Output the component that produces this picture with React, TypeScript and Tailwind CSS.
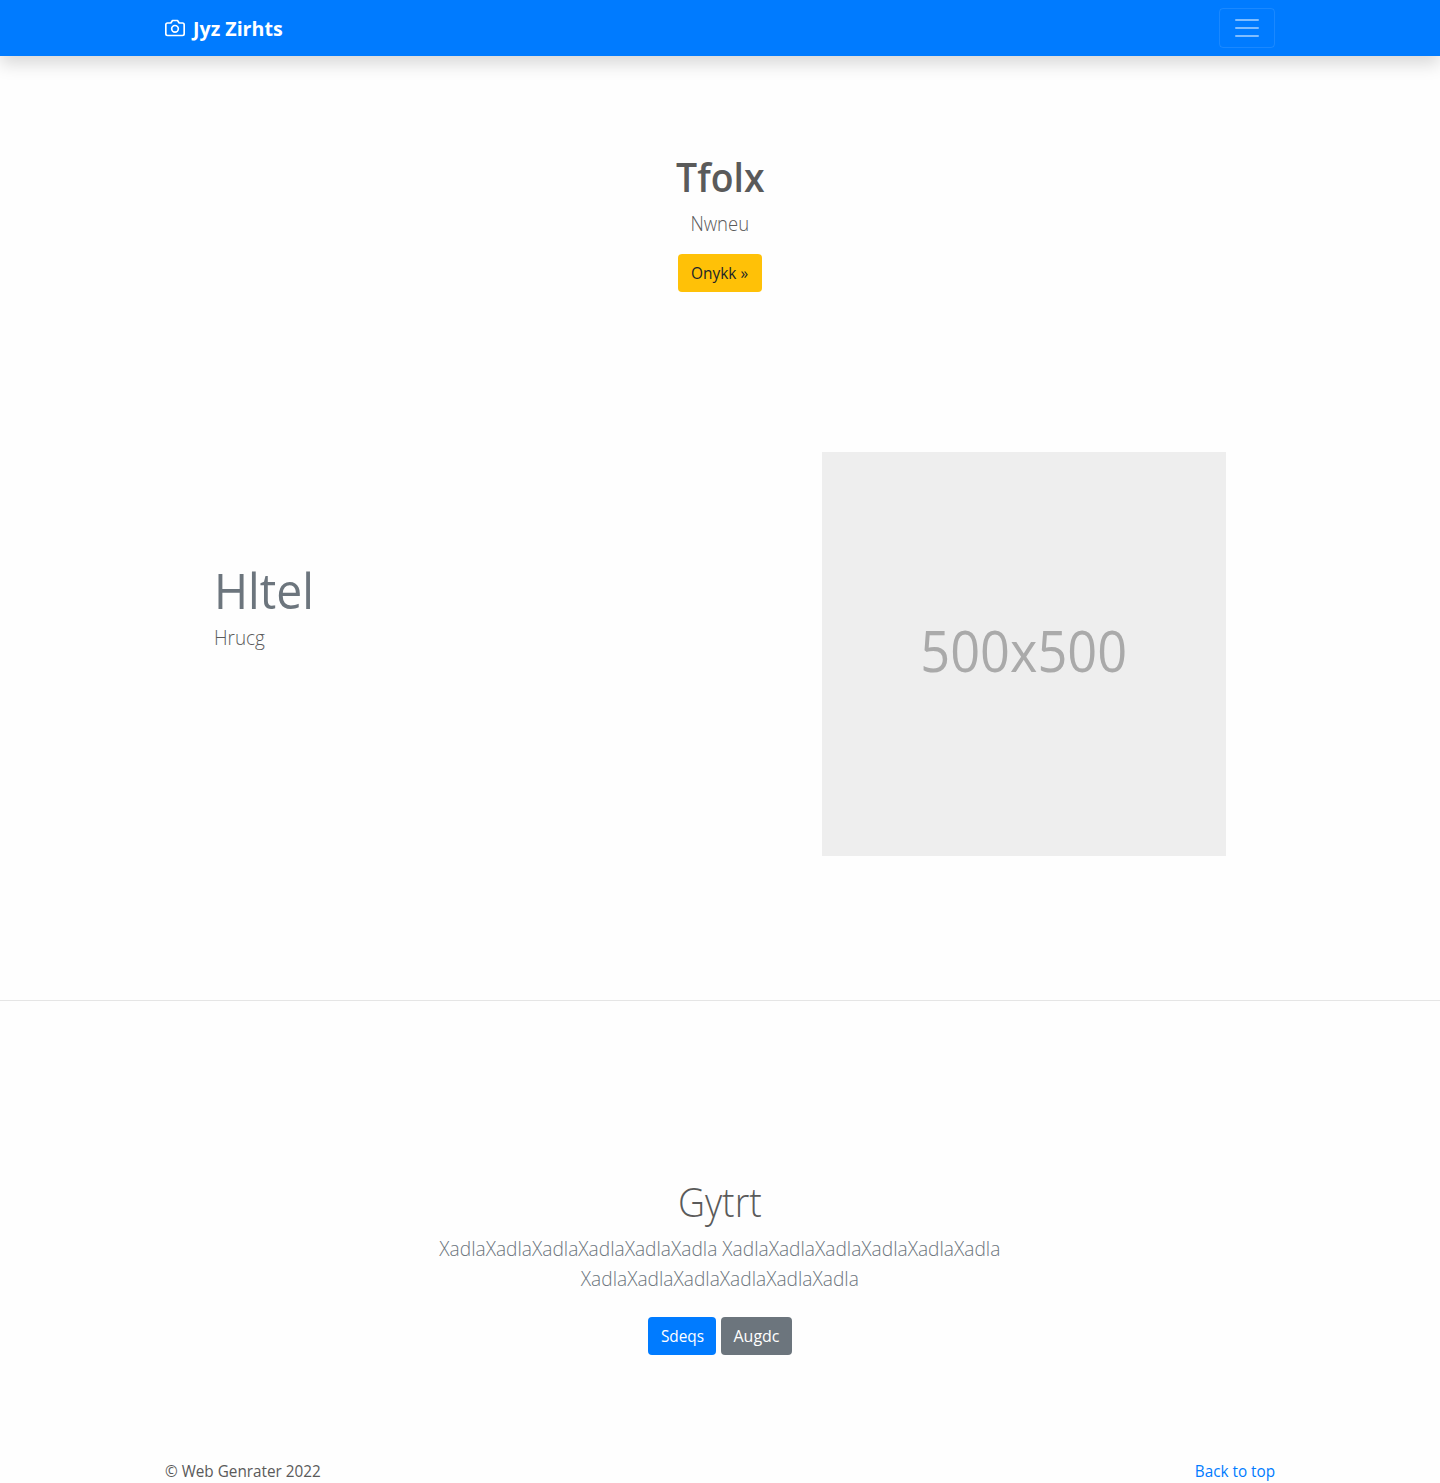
const CameraIcon = () => (
  <svg
    width="20"
    height="20"
    viewBox="0 0 24 24"
    fill="none"
    stroke="currentColor"
    strokeWidth="2"
    strokeLinecap="round"
    strokeLinejoin="round"
    className="mr-2"
  >
    <path d="M23 19a2 2 0 0 1-2 2H3a2 2 0 0 1-2-2V8a2 2 0 0 1 2-2h4l2-3h6l2 3h4a2 2 0 0 1 2 2z" />
    <circle cx="12" cy="13" r="4" />
  </svg>
);

const MenuIcon = () => (
  <svg width="30" height="30" viewBox="0 0 30 30" stroke="rgba(255,255,255,0.5)" strokeWidth="2" strokeMiterlimit="10">
    <path strokeLinecap="round" d="M4 7h22M4 15h22M4 23h22" />
  </svg>
);

export default function App() {
  return (
    <div className="flex h-[1483px] flex-col overflow-hidden bg-[#fefefe] font-['Open_Sans','Noto_Sans',sans-serif] text-base text-[#5a5a5a]">
      <header className="h-14 shrink-0 bg-[#007bff] shadow-[0_8px_16px_rgba(0,0,0,0.15)]">
        <div className="mx-auto flex h-full w-[1110px] items-center justify-between">
          <a href="#" className="flex items-center text-white">
            <CameraIcon />
            <strong className="origin-left scale-x-[0.98] pt-[2px] text-[20px] leading-[30px] font-bold whitespace-nowrap">Jyz Zirhts</strong>
          </a>
          <button className="flex h-10 w-14 items-center justify-center rounded-[4px] border border-white/10" aria-label="Menu">
            <MenuIcon />
          </button>
        </div>
      </header>

      <section className="flex h-[396px] shrink-0 flex-col items-center pt-[97px]">
        <h1 className="scale-x-[0.935] text-[40px] leading-[48px] font-semibold">Tfolx</h1>
        <p className="mt-2 scale-x-[0.925] text-[20px] leading-[30px] font-light">Nwneu</p>
        <a href="#" className="mt-[15px] flex h-[38px] w-[84px] items-center justify-center rounded-[4px] bg-[#ffc107] text-[#212529]">
          <span className="scale-x-[0.965]">Onykk »</span>
        </a>
      </section>

      <section className="mx-auto flex h-[404px] w-[1012px] shrink-0 justify-between">
        <div className="pt-[108px]">
          <h2 className="origin-left scale-x-[0.925] text-[50px] leading-[60px] text-[#6c757d]">Hltel</h2>
          <p className="mt-[3px] origin-left scale-x-[0.945] text-[20px] leading-[30px] font-light">Hrucg</p>
        </div>
        <div className="flex size-[404px] items-center justify-center bg-[#eee] pb-[9px] text-[56px] text-[#aaa]">
          <span className="scale-x-[0.935]">500x500</span>
        </div>
      </section>

      <hr className="mt-36 shrink-0 border-t border-[#e5e5e5]" />

      <section className="flex shrink-0 flex-col items-center pt-[177px] text-center">
        <h2 className="scale-x-[0.935] text-[40px] leading-[48px] font-light">Gytrt</h2>
        <p className="mt-2 scale-x-[0.958] text-[20px] leading-[30px] font-light whitespace-nowrap text-[#6c757d]">
          XadlaXadlaXadlaXadlaXadlaXadla XadlaXadlaXadlaXadlaXadlaXadla
          <br />
          XadlaXadlaXadlaXadlaXadlaXadla
        </p>
        <div className="mt-[23px] flex gap-[5px] text-white">
          <a href="#" className="flex h-[38px] w-[68px] items-center justify-center rounded-[4px] bg-[#007bff]">
            <span className="scale-x-[0.96]">Sdeqs</span>
          </a>
          <a href="#" className="flex h-[38px] w-[71px] items-center justify-center rounded-[4px] bg-[#6c757d]">
            <span>Augdc</span>
          </a>
        </div>
      </section>

      <footer className="mx-auto mt-[104px] flex w-[1110px] shrink-0 justify-between leading-6">
        <p className="origin-left scale-x-[0.955]">© Web Genrater 2022</p>
        <a href="#" className="origin-right scale-x-[0.955] text-[#007bff]">Back to top</a>
      </footer>
    </div>
  );
}
